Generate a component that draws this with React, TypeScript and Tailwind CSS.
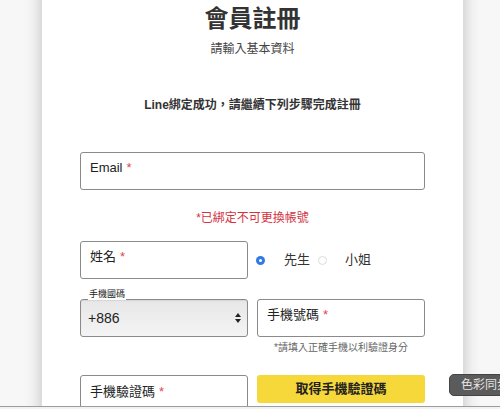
import React from 'react'

const font = { fontFamily: '"Liberation Sans", "Noto Sans CJK TC", sans-serif' }

function Req() {
  return <span className="ml-1 text-[#e0484f]">*</span>
}

function Field({ label, className = '' }: { label: string; className?: string }) {
  return (
    <div
      className={`h-[38px] rounded-[3px] border border-[#8a8a8a] bg-white pl-[9px] pt-[7px] text-[13px] leading-[16px] text-[#222] ${className}`}
    >
      {label}
      <Req />
    </div>
  )
}

export default function App() {
  return (
    <div className="relative h-[409px] w-[500px] overflow-hidden bg-[#f7f7f7]" style={font}>
      <div className="-mt-[20px] ml-[42px] h-[450px] w-[421px] bg-white px-[38px] pt-[20px] shadow-[0_0_16px_rgba(0,0,0,0.24)]">
        <h1 className="mt-[4px] text-center text-[24px] font-bold leading-[30px] text-[#333]">
          會員註冊
        </h1>
        <p className="mt-[7px] text-center text-[12px] leading-[16px] text-[#444]">請輸入基本資料</p>
        <p className="mt-[40px] text-center text-[12px] font-bold leading-[16px] text-[#333]">
          Line綁定成功，請繼續下列步驟完成註冊
        </p>

        <Field label="Email" className="mt-[39px]" />

        <p className="mt-[20px] text-center text-[12px] leading-[16px] text-[#d2343f]">*已綁定不可更換帳號</p>

        <div className="mt-[15px] grid grid-cols-2 gap-[9px]">
          <Field label="姓名" />
          <div className="flex items-center text-[13px] text-[#333]">
            <span className="ml-[-1px] flex h-[9px] w-[9px] items-center justify-center rounded-full bg-[#2f7ae5]">
              <span className="h-[3px] w-[3px] rounded-full bg-white" />
            </span>
            <span className="ml-[19px]">先生</span>
            <span className="ml-[8px] h-[9px] w-[9px] rounded-full border border-[#dcdcdc] bg-white" />
            <span className="ml-[18px]">小姐</span>
          </div>
        </div>

        <div className="mt-[20px] grid grid-cols-2 gap-[9px]">
          <div className="relative">
            <span className="absolute -top-[11px] left-[8px] bg-white px-[1px] text-[9px] leading-[12px] text-[#222]">
              手機國碼
            </span>
            <div className="flex h-[38px] items-center justify-between rounded-[3px] border border-[#8a8a8a] bg-gradient-to-b from-[#e7e7e7] to-[#f4f4f4] pl-[7px] pr-[6px] text-[14px] text-[#222] shadow-[inset_0_1px_1px_rgba(0,0,0,0.08)]">
              +886
              <svg width="6" height="10" viewBox="0 0 6 10">
                <path d="M3 0 L6 4 L0 4 Z" fill="#222" />
                <path d="M0 6 L6 6 L3 10 Z" fill="#222" />
              </svg>
            </div>
          </div>
          <div>
            <Field label="手機號碼" />
            <p className="mt-[4px] text-center text-[10px] leading-[14px] text-[#666]">*請填入正確手機以利驗證身分</p>
          </div>
        </div>

        <div className="mt-[20px] grid grid-cols-2 gap-[9px]">
          <Field label="手機驗證碼" className="pt-[8px]" />
          <button className="h-[28px] rounded-[3px] bg-[#f6d83a] text-[13px] font-bold text-[#222]">
            取得手機驗證碼
          </button>
        </div>
      </div>

      <div className="absolute left-[449px] top-[374px] rounded-[5px] border border-[#444] bg-[#5b5b5b] py-[2px] pl-[11px] pr-[8px] text-[12px] leading-[16px] whitespace-nowrap text-[#e4e4e4]">
        色彩同步
      </div>

      <div className="absolute bottom-0 left-0 h-[3px] w-full border-t border-[#9c9c9c] bg-[#f2f2f2]" />
    </div>
  )
}
